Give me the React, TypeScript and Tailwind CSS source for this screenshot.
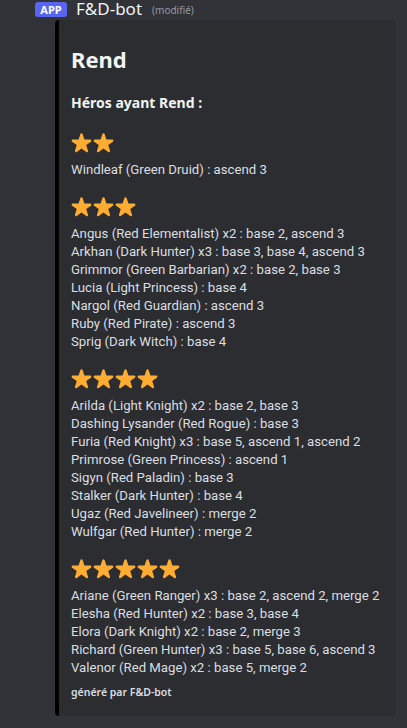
import React from "react";

const Star = () => (
  <svg width="21" height="21" viewBox="0 0 36 36" className="shrink-0">
    <path
      fill="#FFAC33"
      d="M27.287 34.627c-.404 0-.806-.124-1.152-.371L18 28.422l-8.135 5.834a1.97 1.97 0 0 1-2.312-.008 1.971 1.971 0 0 1-.721-2.194l3.034-9.792-8.062-5.681a1.98 1.98 0 0 1-.708-2.203 1.978 1.978 0 0 1 1.866-1.363L12.947 13l3.179-9.549a1.976 1.976 0 0 1 3.749 0L23 13l10.036.015a1.975 1.975 0 0 1 1.159 3.566l-8.062 5.681 3.034 9.792a1.970 1.970 0 0 1-.72 2.194 1.957 1.957 0 0 1-1.16.379z"
    />
  </svg>
);

const sections: { stars: number; lines: string[] }[] = [
  { stars: 2, lines: ["Windleaf (Green Druid) : ascend 3"] },
  {
    stars: 3,
    lines: [
      "Angus (Red Elementalist) x2 : base 2, ascend 3",
      "Arkhan (Dark Hunter) x3 : base 3, base 4, ascend 3",
      "Grimmor (Green Barbarian) x2 : base 2, base 3",
      "Lucia (Light Princess) : base 4",
      "Nargol (Red Guardian) : ascend 3",
      "Ruby (Red Pirate) : ascend 3",
      "Sprig (Dark Witch) : base 4",
    ],
  },
  {
    stars: 4,
    lines: [
      "Arilda (Light Knight) x2 : base 2, base 3",
      "Dashing Lysander (Red Rogue) : base 3",
      "Furia (Red Knight) x3 : base 5, ascend 1, ascend 2",
      "Primrose (Green Princess) : ascend 1",
      "Sigyn (Red Paladin) : base 3",
      "Stalker (Dark Hunter) : base 4",
      "Ugaz (Red Javelineer) : merge 2",
      "Wulfgar (Red Hunter) : merge 2",
    ],
  },
  {
    stars: 5,
    lines: [
      "Ariane (Green Ranger) x3 : base 2, ascend 2, merge 2",
      "Elesha (Red Hunter) x2 : base 3, base 4",
      "Elora (Dark Knight) x2 : base 2, merge 3",
      "Richard (Green Hunter) x3 : base 5, base 6, ascend 3",
      "Valenor (Red Mage) x2 : base 5, merge 2",
    ],
  },
];

const starRows: Record<number, number[]> = {
  2: [0, 1],
  3: [0, 1, 2],
  4: [0, 1, 2, 3],
  5: [0, 1, 2, 3, 4],
};

export default function App() {
  return (
    <div
      className="w-[407px] h-[728px] bg-[#313338] overflow-hidden"
      style={{ fontFamily: '"Noto Sans", "Open Sans", sans-serif' }}
    >
      <div className="pl-[35px] h-[18px] flex items-center">
        <span className="bg-[#5865f2] text-white text-[11px] font-bold leading-none rounded-[3px] w-[32px] h-[15px] flex items-center justify-center">
          APP
        </span>
        <span className="ml-[9px] text-[#f2f3f5] text-[17px] leading-none -mt-[1px]">F&amp;D-bot</span>
        <span className="ml-[10px] text-[#949ba4] text-[10px] leading-none mt-[2px]">(modifié)</span>
      </div>
      <div className="ml-[55px] mt-[2px] w-[341px] h-[696px] bg-[#2b2d31] border-l-[4px] border-l-black rounded-[4px] pl-[12px] pr-[10px] pt-[26px]">
        <div className="text-[#f2f3f5] text-[22px] font-bold leading-[26px]">Rend</div>
        <div className="mt-[22px] text-[#f2f3f5] text-[14px] font-bold leading-[18px]">Héros ayant Rend :</div>
        <div className="pt-[3px]">
          {sections.map((s) => (
            <div key={s.stars} className="mt-[15px]">
              <div className="flex h-[24px] items-center gap-[1px]">
                {starRows[s.stars].map((i) => (
                  <Star key={i} />
                ))}
              </div>
              <div
                className="mt-[7px] text-[#dbdee1] text-[13.2px] leading-[18px] whitespace-nowrap"
                style={{ fontFamily: 'Roboto, "Noto Sans", sans-serif' }}
              >
                {s.lines.map((l) => (
                  <div key={l}>{l}</div>
                ))}
              </div>
            </div>
          ))}
        </div>
        <div className="mt-[8px] text-[#dbdee1] text-[10.5px] font-semibold leading-[14px]">généré par F&amp;D-bot</div>
      </div>
    </div>
  );
}
